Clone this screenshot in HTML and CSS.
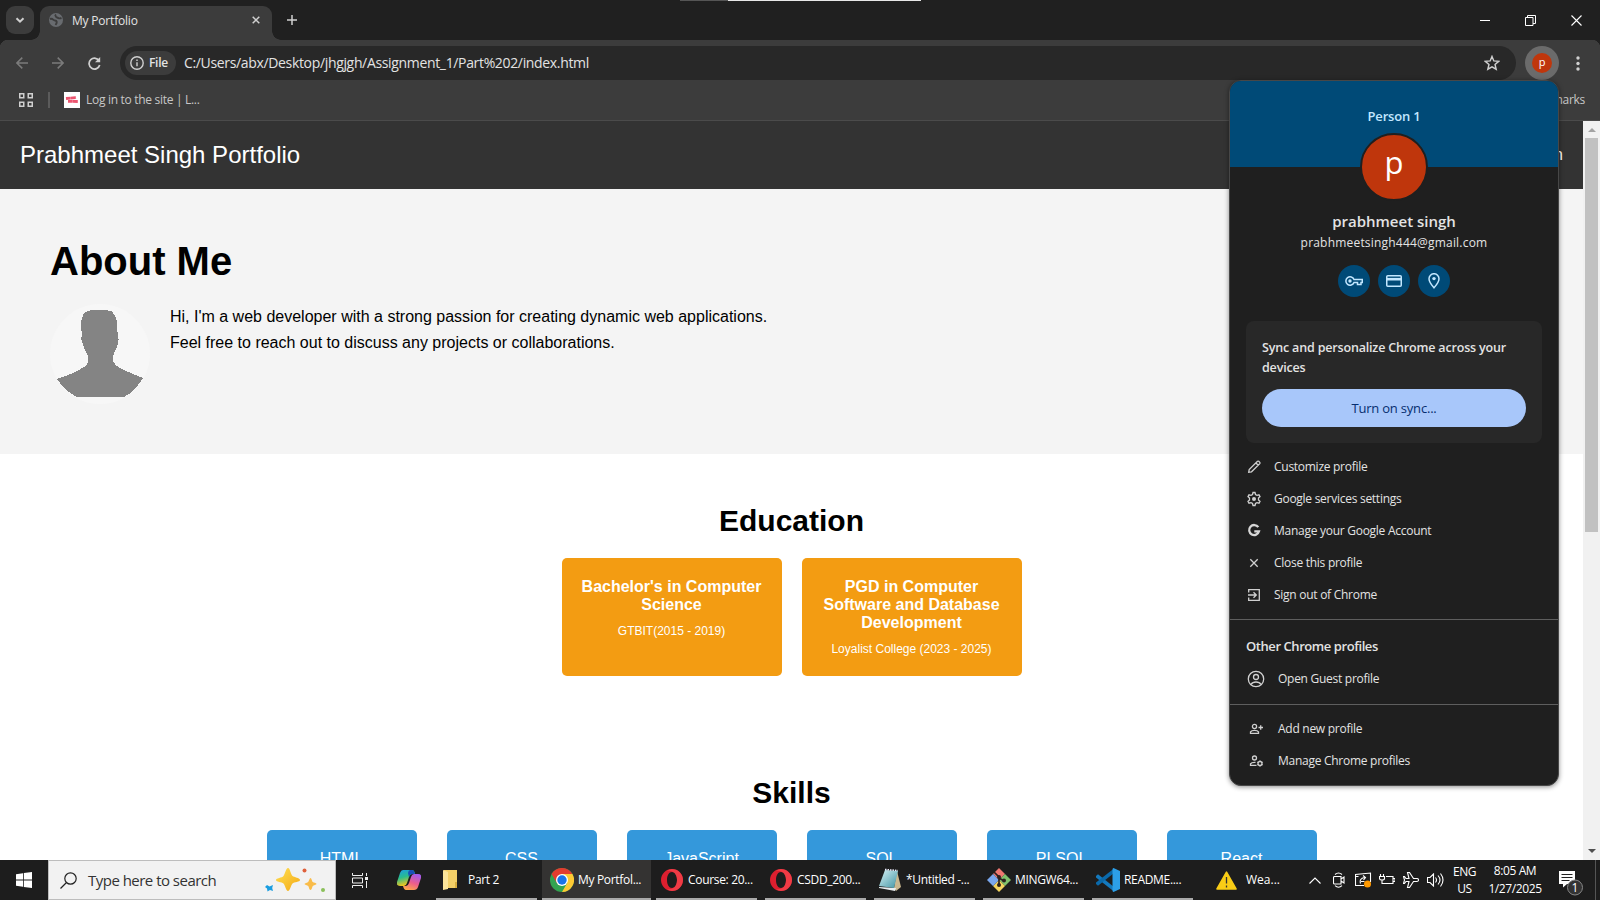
FILE: index.html
```html
<!DOCTYPE html>
<html lang="en">
<head>
<meta charset="utf-8">
<title>My Portfolio</title>
<link rel="stylesheet" href="styles.css">
</head>
<body>
<div class="screen">
  <div class="tabstrip">
    <div class="tab-search"><svg width="10" height="7" viewBox="0 0 10 7"><path d="M1.5 1.2 5 4.7 8.500 1.200" class="ln w2"/></svg></div>
    <div class="tab">
      <svg width="14" height="14" viewBox="0 0 14 14"><circle cx="7" cy="7" r="7" fill="#686b6f"/><path d="M1 6C4 5 4 7.500 6 7.500s2.500 2 .5 4.500M6 1.500C7 2.500 6 4 8 4.500s2 1.500 4.500.5" fill="none" stroke="#3c3c3c" stroke-width="1.900"/></svg>
      <span class="tab-title">My Portfolio</span>
      <svg width="8" height="8" viewBox="0 0 8 8"><path d="M.7.700l6.600 6.600M7.300.700.700 7.300" class="ln w15"/></svg>
    </div>
    <svg class="newtab" width="10" height="10" viewBox="0 0 10 10"><path d="M5 0v10M0 5h10" class="ln w15"/></svg>
    <div class="strip-line"></div>
    <div class="winbtns">
      <svg width="10" height="10" viewBox="0 0 10 10"><path d="M0 5.500h10" stroke="#fff"/></svg>
      <svg width="11" height="11" viewBox="0 0 11 11"><path d="M.5 2.500h7.500v8H.5zM2.500 2.500v-2h8v8H8" fill="none" stroke="#fff"/></svg>
      <svg width="11" height="11" viewBox="0 0 11 11"><path d="M.5.500l10 10M10.500.500l-10 10" stroke="#fff" stroke-width="1.100"/></svg>
    </div>
  </div>
  <div class="chrome">
    <div class="toolbar">
      <svg class="nav1" width="12" height="12" viewBox="0 0 12 12"><path d="M12 6H1M6.300.600.900 6l5.400 5.400" fill="none" stroke="#7b7b7b" stroke-width="1.500"/></svg>
      <svg class="nav2" width="12" height="12" viewBox="0 0 12 12"><path d="M0 6h11M5.700.600 11.100 6l-5.400 5.400" fill="none" stroke="#7b7b7b" stroke-width="1.500"/></svg>
      <svg class="nav3" width="13" height="13" viewBox="0 0 13 13"><path d="M11.300 4.200A5.400 5.400 0 1 0 11.700 8" class="ln w17"/><path d="M12.200 0v5.200H7z" fill="#d0d0d0"/></svg>
      <div class="omnibox">
        <div class="chip"><svg width="14" height="14" viewBox="0 0 14 14"><circle cx="7" cy="7" r="6.200" class="ln w14"/><path d="M7 6.200v4M7 3.500v1.500" class="ln w14"/></svg><span>File</span></div>
        <span class="url">C:/Users/abx/Desktop/jhgjgh/Assignment_1/Part%202/index.html</span>
        <svg class="star" width="16" height="16" viewBox="2 2 20 20"><path d="M12 3.800l2.300 5.600 6.100.5-4.600 4 1.400 5.900L12 16.700l-5.200 3.100 1.400-5.900-4.600-4 6.100-.5z" fill="none" stroke="#cfcfcf" stroke-width="1.800"/></svg>
      </div>
      <div class="avatar-btn"><span>p</span></div>
      <svg class="dots" width="4" height="15" viewBox="0 0 4 15"><g fill="#d0d0d0"><circle cx="2" cy="2" r="1.700"/><circle cx="2" cy="7.500" r="1.700"/><circle cx="2" cy="13" r="1.700"/></g></svg>
    </div>
    <div class="bookmarks">
      <svg width="14" height="14" viewBox="0 0 14 14"><path d="M.75.750h4v4h-4zM9.250.750h4v4h-4zM.75 9.250h4v4h-4zM9.250 9.250h4v4h-4z" class="ln w15"/></svg>
      <i class="sep"></i>
      <svg class="fav" width="16" height="16" viewBox="0 0 16 16"><path fill="#fff" d="M0 0h16v16H0z"/><path d="M2 6.500l10-1M4 9.300l10 .2" stroke="#ec5570" stroke-width="2.800" stroke-dasharray="4.600 .2"/></svg>
      <span class="bm">Log in to the site | L...</span>
      <span class="bm all">All Bookmarks</span>
    </div>
  </div>
  <div class="viewport">
    <main class="page">
      <header class="site-head"><span>Prabhmeet Singh Portfolio</span><span class="navlink">Education</span></header>
      <section class="about">
        <h1>About Me</h1>
        <div class="about-row">
          <svg width="100" height="100" viewBox="0 0 100 100"><circle cx="50" cy="50" r="50" fill="#f7f7f7"/><path d="M31 22C31 11 34 6 43 6h13c9 0 11 8 11 16l1 11c1 1 1 3 0 6-1 6-4 9-5 13l0 5c2 5 8 8 13 10l17 7c-5 8-11 15-19 19H27C19 89 12 83 7 75c8-3 15-5 20-8 5-3 11-5 11-10l0-5c-1-4-4-6-5-12-2-4-2-6-1-8z" fill="#848484" shape-rendering="crispEdges"/></svg>
          <p>Hi, I'm a web developer with a strong passion for creating dynamic web applications.<br>Feel free to reach out to discuss any projects or collaborations.</p>
        </div>
      </section>
      <section class="edu">
        <h2>Education</h2>
        <div class="edu-row">
          <article><h3>Bachelor's in Computer<br>Science</h3><p>GTBIT(2015 - 2019)</p></article>
          <article><h3>PGD in Computer<br>Software and Database<br>Development</h3><p>Loyalist College (2023 - 2025)</p></article>
        </div>
      </section>
      <section class="skills">
        <h2>Skills</h2>
        <div class="skill-row"><div>HTML</div><div>CSS</div><div>JavaScript</div><div>SQL</div><div>PLSQL</div><div>React</div></div>
      </section>
    </main>
    <div class="scrollbar"><i class="up"></i><i class="thumb"></i><i class="down"></i></div>
  </div>
  <div class="taskbar">
    <div class="start"><svg width="16" height="16" viewBox="0 0 16 16"><path fill="#fff" d="M0 2.200 7 1.200v6.400H0zM7.800 1.100 16 0v7.600H7.800zM0 8.400h7v6.400l-7-1zM7.800 8.400H16V16l-8.200-1.100z"/></svg></div>
    <div class="search">
      <svg width="17" height="17" viewBox="0 0 17 17"><circle cx="10.500" cy="6.500" r="5.700" fill="none" stroke="#222" stroke-width="1.200"/><path d="M6.500 10.500.5 16.500" stroke="#222" stroke-width="1.300"/></svg>
      <span>Type here to search</span>
      <svg class="spark" width="62" height="26" viewBox="0 0 62 26"><defs><linearGradient id="gold" x1="0" y1="0" x2="1" y2="1"><stop offset="0" stop-color="#ffe052"/><stop offset="1" stop-color="#f3a916"/></linearGradient></defs><path d="M24 1c2 0 3 7 4.500 8S36 11 36 13s-6 2-7.500 3.500S26 24 24 24s-3-6-4.500-7.500S12 15 12 13s6-2 7.500-4S22 1 24 1z" fill="url(#gold)"/><path d="M46.500 11c1 0 1.500 3.500 2.300 4s3.700 1 3.700 2-3 1-3.700 2-1 4-2.300 4-1.500-3-2.300-4-3.700-1-3.700-2 3-1 3.700-2 1.300-4 2.300-4z" fill="#f9bc4a"/><circle cx="40.500" cy="3.500" r="2" fill="#df603b"/><circle cx="59" cy="23" r="2" fill="#8bc05a"/><path d="M3 18l2.500 1.500L9 18l-.8 3L9 24l-3-1-2.500 1.500-.5-3L1 20z" fill="#1a9de0"/></svg>
    </div>
    <div class="taskview"><svg width="16" height="15" viewBox="0 0 16 15"><path d="M.5 0v2.500h10V0M.5 5h10v5H.5zM.5 15v-2.500h10V15M14.500 0v3M14.500 8v7" fill="none" stroke="#eee"/><path d="M13 4h3v3h-3z" fill="#eee"/></svg></div>
    <div class="copilot"><svg width="24" height="22" viewBox="0 0 24 22"><defs><linearGradient id="c1" x1="0" y1="0" x2=".3" y2="1"><stop offset="0" stop-color="#1b9be8"/><stop offset=".5" stop-color="#29bd8c"/><stop offset="1" stop-color="#f4c61c"/></linearGradient><linearGradient id="c2" x1=".6" y1="0" x2=".2" y2="1"><stop offset="0" stop-color="#a65be8"/><stop offset=".5" stop-color="#ed5d8c"/><stop offset="1" stop-color="#ffad45"/></linearGradient></defs><path d="M6 1h9q2.500 0 3 4H15q-2 0-3 3l-2 6q-1 3-3 3H3q-4 0-3-4L3 4Q4 1 6 1z" fill="url(#c1)"/><path d="M13 1h2q2 0 3 4H15q-2 0-3 3l-1-4Q11.500 1 13 1z" fill="#194fb9"/><path d="M17 5h4q4 0 3 4l-3 9q-1 3-4 3H9q-2 0-3-4h3q2 0 3-3l2-6q1-3 3-3z" fill="url(#c2)"/></svg></div>
    <div class="apps">
      <div class="app folder"><svg width="24" height="24" viewBox="0 0 24 24"><path d="M7 2h13v18H7z" fill="#f2cf68"/><path d="M6 2l5 2v17l-5 1z" fill="#fbe49a"/><path d="M18 14h2v6h-2z" fill="#d7ad3d"/></svg><span>Part 2</span></div>
      <div class="app active"><svg width="24" height="24" viewBox="0 0 24 24"><circle cx="12" cy="12" r="12" fill="#32a350"/><path d="M1.600 6A12 12 0 0 1 22.400 6H12L6.800 15z" fill="#e33b2e"/><path d="M22.400 6A12 12 0 0 1 12 24l5.200-9L12 6z" fill="#fcc934"/><circle cx="12" cy="12" r="6" fill="#fff"/><circle cx="12" cy="12" r="4.700" fill="#1a73e8"/></svg><span>My Portfol...</span></div>
      <div class="app"><svg width="24" height="24" viewBox="0 0 24 24"><path fill-rule="evenodd" fill="#dd1f2f" d="M12 1a11 11 0 1 0 0 22 11 11 0 0 0 0-22zm0 3c3 0 5 3.500 5 8s-2 8-5 8-5-3.500-5-8 2-8 5-8z"/><path d="M12 1a11 11 0 0 1 0 22q-3 0-5-2 3 1 6-1c2-1 4-4 4-8s-2-7-4-8q-3-2-6-1 2-2 5-2z" fill="#fa4b52" opacity=".65"/></svg><span>Course: 20...</span></div>
      <div class="app"><svg width="24" height="24" viewBox="0 0 24 24"><path fill-rule="evenodd" fill="#dd1f2f" d="M12 1a11 11 0 1 0 0 22 11 11 0 0 0 0-22zm0 3c3 0 5 3.500 5 8s-2 8-5 8-5-3.500-5-8 2-8 5-8z"/><path d="M12 1a11 11 0 0 1 0 22q-3 0-5-2 3 1 6-1c2-1 4-4 4-8s-2-7-4-8q-3-2-6-1 2-2 5-2z" fill="#fa4b52" opacity=".65"/></svg><span>CSDD_200...</span></div>
      <div class="app"><svg width="24" height="24" viewBox="0 0 24 24"><defs><linearGradient id="np" x1="0" y1="0" x2="1" y2="1"><stop offset="0" stop-color="#d8f3f6"/><stop offset="1" stop-color="#3f93a3"/></linearGradient></defs><path d="M19 3l4 16-5 4-2-3z" fill="#c9b78f"/><path d="M1 19l17 1-1 3L1 20z" fill="#e7edf0"/><path d="M7 2l13 1-4 17-15-2z" fill="url(#np)"/><path d="M7 1.500l13 1" stroke="#eef" stroke-width="1.500" stroke-dasharray="1.500 1"/></svg><span>*Untitled -...</span></div>
      <div class="app"><svg width="24" height="24" viewBox="0 0 24 24"><path d="M12 0l6 6-6 6-6-6z" fill="#ef7770"/><path d="M18 6l6 6-6 6-6-6z" fill="#80c26c"/><path d="M12 12l6 6-6 6-6-6z" fill="#f5d55f"/><path d="M6 6l6 6-6 6-6-6z" fill="#7aa7ed"/><path d="M7 4l5 5v9M12 10l5 3" fill="none" stroke="#2b211d" stroke-width="1.700"/><g fill="#2b211d"><circle cx="12" cy="9" r="2"/><circle cx="12" cy="17" r="2"/><circle cx="17" cy="12.500" r="2"/></g></svg><span>MINGW64...</span></div>
      <div class="app"><svg width="24" height="24" viewBox="0 0 24 24"><path d="M0 8l2-1.700L18 19v4.500L0 9.500z" fill="#1479bd"/><path d="M0 16l2 1.700L18 5V.5L0 14.500z" fill="#0a69aa"/><path d="M17.500 0L24 3v18l-6.500 3q-1 0-1-2V2q0-2 1-2z" fill="#2c9fe8"/></svg><span>README....</span></div>
    </div>
    <div class="tray">
      <svg class="warn" width="21" height="19" viewBox="0 0 21 19"><path d="M10.500 1.200 20 18H1z" fill="#f9cd16" stroke="#f9cd16" stroke-width="1.600" stroke-linejoin="round"/><path d="M10.500 6v6.500M10.500 14.500v2" stroke="#333" stroke-width="1.300"/></svg>
      <span class="wea">Wea...</span>
      <svg class="chev" width="12" height="7" viewBox="0 0 12 7"><path d="M.5 6.500 6 1l5.500 5.500" class="tl"/></svg>
      <svg class="t1" width="12" height="16" viewBox="0 0 12 16"><path d="M1 4.500h7v7.500H1.500q-1 0-1-1V5.500q0-1 1-1M8 7l3-2v6l-3-2M2 2.500Q5.500-.5 9 2.500M2 13.700q3.500 3 7 0" class="tl"/></svg>
      <svg class="t2" width="17" height="16" viewBox="0 0 17 16"><path d="M9 13.500H.5v-11l15-1.500v9M.5 4.500h3M5.500 11.500q-1.500-5 4-6M8 3.500l2.500 2L8.500 8M6 9.500h3.500" class="tl"/><circle cx="12.500" cy="12" r="3.500" fill="#ff9900"/></svg>
      <svg class="t3" width="16" height="12" viewBox="0 0 16 12"><path d="M7 2.500h7v7H3.500M14.500 4.500H16v3h-1.500M1.500 0v3M4.500 0v3M.5 2.500h5v2Q5.500 6 3 6T.5 4.500zM3 6v4" class="tl"/></svg>
      <svg class="t4" width="16" height="16" viewBox="0 0 16 16"><path d="M6 6.500 4.500.500h2l4 6H14q1.500 0 1.500 1.500T14 9.500h-3.500l-4 6h-2L6 9.500H3l-1.500 2h-1L1.500 8 .5 4.500h1l1.500 2z" class="tl"/></svg>
      <svg class="t5" width="17" height="14" viewBox="0 0 17 14"><path d="M.5 4.500h2.500L6.500 1v12L3 9.500H.5zM8.500 4.500q2 2.500 0 5M11 2.500q4 4.500 0 9M13.500.500q5 6.500 0 13" class="tl"/></svg>
      <div class="lang">ENG<br>US</div>
      <div class="clock">8:05 AM<br>1/27/2025</div>
      <svg class="note" width="25" height="25" viewBox="0 0 25 25"><path d="M0 0h16v13H8l-4 3.500V13H0z" fill="#fff"/><path d="M2.500 3.500h11M2.500 6.500h11M2.500 9.500h8" stroke="#222"/><circle cx="16" cy="16.500" r="7.500" fill="#333" stroke="#888"/><text x="16" y="21" text-anchor="middle" font-family="Open Sans, sans-serif" font-size="12" fill="#fff">1</text></svg>
      <i class="desk"></i>
    </div>
  </div>

  <aside class="popup">
    <div class="banner"><span>Person 1</span></div>
    <div class="big-avatar"><span>p</span></div>
    <div class="pname">prabhmeet singh</div>
    <div class="pmail">prabhmeetsingh444@gmail.com</div>
    <div class="rounds">
      <div><svg width="18" height="10" viewBox="0 0 18 10"><path d="M9 3.500a4.200 4.200 0 1 0 0 3h3.500v2H16v-2h1.300v-3z" fill="none" stroke="#c2e7ff" stroke-width="1.500"/><circle cx="5" cy="5" r="1.700" fill="#c2e7ff"/></svg></div>
      <div><svg width="16" height="12" viewBox="0 0 16 12"><rect x=".75" y=".75" width="14.500" height="10.500" rx="1" fill="none" stroke="#c2e7ff" stroke-width="1.500"/><path d="M1 4.200h14" stroke="#c2e7ff" stroke-width="2.600"/></svg></div>
      <div><svg width="12" height="16" viewBox="0 0 12 16"><path d="M6 14.800C3 11.300 1 8.500 1 5.700a5 5 0 0 1 10 0c0 2.800-2 5.600-5 9.100z" fill="none" stroke="#c2e7ff" stroke-width="1.500"/><circle cx="6" cy="5.600" r="1.700" fill="#c2e7ff"/></svg></div>
    </div>
    <div class="sync"><p>Sync and personalize Chrome across your<br>devices</p><div class="btn">Turn on sync...</div></div>
    <div class="menu">
      <div class="item"><svg viewBox="0 0 16 16"><path d="M2.700 13.300l.5-2.800 8.300-8.200q.6-.5 1.200 0l1.100 1.100q.5.600 0 1.200l-8.300 8.200zM10 4l2.200 2.200" class="ic"/></svg><span>Customize profile</span></div>
      <div class="item"><svg viewBox="0 0 16 16"><path d="M6.500 3.500 7 1.500h2l.5 2L11 4.400l2-.6 1 1.800L12.500 7v2l1.500 1.400-1 1.800-2-.6-1.500.9-.5 2H7l-.5-2-1.500-.9-2 .6-1-1.800L3.500 9V7L2 5.600l1-1.800 2 .6z" class="ic"/><circle cx="8" cy="8" r="2" fill="#d0d0d0"/></svg><span>Google services settings</span></div>
      <div class="item"><svg viewBox="0 0 16 16"><path d="M12.300 4.200A5 5 0 1 0 13 8.300H8.300" fill="none" stroke="#d6d6d6" stroke-width="2.300"/></svg><span>Manage your Google Account</span></div>
      <div class="item"><svg viewBox="0 0 16 16"><path d="M4.300 4.300l7.400 7.400M11.700 4.300l-7.400 7.400" class="ic"/></svg><span>Close this profile</span></div>
      <div class="item"><svg viewBox="0 0 16 16"><path d="M2.700 5.500V2.700h10.600v10.600H2.700v-2.800M2 8h8M7.500 5.200 10.300 8l-2.800 2.800" class="ic"/></svg><span>Sign out of Chrome</span></div>
    </div>
    <div class="others">
      <h4>Other Chrome profiles</h4>
      <div class="item"><svg class="guest" viewBox="0 0 18 18"><circle cx="9" cy="9" r="7.700" class="ic"/><circle cx="9" cy="7" r="2.500" class="ic"/><path d="M4 14.500Q5.500 12 9 12t5 2.500" class="ic"/></svg><span>Open Guest profile</span></div>
    </div>
    <div class="manage">
      <div class="item"><svg viewBox="0 0 16 16"><circle cx="6.500" cy="5.500" r="2.100" class="ic"/><path d="M2.500 12.300v-1.500q1-1.500 4-1.500t4 1.500v1.500zM10.500 6.500h4.500M12.700 4.300v4.400" class="ic"/></svg><span>Add new profile</span></div>
      <div class="item"><svg viewBox="0 0 16 16"><circle cx="6.500" cy="5" r="2" class="ic"/><path d="M8.500 12.300h-6v-1.500q1-1.500 4-1.500h1" class="ic"/><circle cx="12" cy="10.500" r="2" class="ic"/><path d="M12 7.500v1M12 12.500v1M9.400 9l.9.500M13.700 11.500l.9.500M9.400 12l.9-.5M13.700 9.500l.9-.5" class="ic"/></svg><span>Manage Chrome profiles</span></div>
    </div>
  </aside>
  <div class="topmark"></div>
</div>
</body>
</html>
```

FILE: styles.css
```css
* { box-sizing: border-box; margin: 0; padding: 0; }
body { font-family: "Open Sans", "Noto Sans", sans-serif; background: #fff; overflow: hidden; }
svg { display: block; flex: none; }
span { white-space: nowrap; }
.screen { position: relative; width: 1600px; height: 900px; display: flex; flex-direction: column; overflow: hidden; }
.ln { fill: none; stroke: #d0d0d0; }
.w14 { stroke-width: 1.4; } .w15 { stroke-width: 1.5; } .w17 { stroke-width: 1.7; } .w2 { stroke-width: 2; }

/* tab strip */
.tabstrip { height: 40px; background: #202020; display: flex; align-items: center; flex: none; }
.tab-search { width: 28px; height: 28px; margin-left: 6px; border-radius: 9px; background: #3c3c3c; display: flex; align-items: center; justify-content: center; }
.tab { position: relative; width: 232px; height: 34px; margin: 6px 0 0 6px; border-radius: 9px 9px 0 0; background: #3c3c3c; display: flex; align-items: center; padding: 0 12px 6px 9px; }
.tab::before, .tab::after { content: ""; position: absolute; bottom: 0; width: 9px; height: 9px; }
.tab::before { left: -9px; background: radial-gradient(circle at 0 0, #202020 8.500px, #3c3c3c 9px); }
.tab::after { right: -9px; background: radial-gradient(circle at 100% 0, #202020 8.500px, #3c3c3c 9px); }
.tab-title { flex: 1; margin-left: 9px; font-size: 12px; color: #e3e3e3; letter-spacing: -.2px; }
.newtab { margin-left: 15px; }
.strip-line { flex: 1; }
.winbtns { display: flex; align-items: center; gap: 35px; margin-right: 18px; }
.topmark { position: absolute; left: 680px; top: 0; width: 241px; height: 1px; background: linear-gradient(90deg, #555 48px, #e8e8e8 48px); }

/* toolbar */
.chrome { background: #3c3c3c; height: 81px; flex: none; border-bottom: 1px solid #4b4b4b; border-radius: 8px 8px 0 0; box-shadow: 0 -8px 0 0 #202020; }
.chrome { position: relative; background: radial-gradient(circle at 8px 8px, #3c3c3c 8px, #202020 8.500px) 0 0 / 8px 8px no-repeat, radial-gradient(circle at 0 8px, #3c3c3c 8px, #202020 8.500px) 100% 0 / 8px 8px no-repeat, #3c3c3c; border-radius: 0; box-shadow: none; }
.toolbar { height: 46px; display: flex; align-items: center; }
.nav1 { margin-left: 16px; } .nav2 { margin-left: 24px; } .nav3 { margin-left: 24px; }
.omnibox { margin-left: 19px; width: 1396px; height: 34px; border-radius: 17px; background: #282828; display: flex; align-items: center; padding: 0 16px 0 5px; }
.chip { height: 24px; width: 51px; border-radius: 12px; background: #3c3c3c; display: flex; align-items: center; gap: 5px; padding: 0 0 1px 5px; font-size: 12px; font-weight: 600; color: #e3e3e3; letter-spacing: -.3px; }
.url { margin-left: 8px; padding-bottom: 1px; flex: 1; font-size: 14px; color: #e3e3e3; letter-spacing: -.34px; }
.avatar-btn { margin-left: 9px; width: 34px; height: 34px; border-radius: 50%; background: #6b6b6b; display: flex; align-items: center; justify-content: center; }
.avatar-btn span { width: 20px; height: 20px; border-radius: 50%; background: #bf360c; color: #fff; font-size: 11px; line-height: 17px; text-align: center; }
.dots { margin-left: 17px; }
.bookmarks { height: 34px; display: flex; align-items: center; padding: 0 15px 6px 19px; }
.bookmarks .sep { width: 2px; height: 16px; background: #5b5b5b; margin: 0 14px 0 15px; }
.bm { margin-left: 6px; font-size: 12px; color: #c7c7c7; letter-spacing: -.3px; padding-bottom: 1px; }
.bm.all { margin-left: auto; }

/* page */
.viewport { height: 739px; display: flex; overflow: hidden; flex: none; }
.page { width: 1583px; font-family: "Liberation Sans", Arial, sans-serif; color: #000; overflow: hidden; }
.site-head { height: 68px; background: #333; color: #fff; display: flex; align-items: center; justify-content: space-between; padding: 0 20px; font-size: 24px; }
.navlink { font-size: 16px; }
.about { height: 265px; background: #f4f4f4; padding: 49px 50px 0; }
.about h1 { font-size: 40px; line-height: 46px; }
.about-row { display: flex; gap: 20px; margin-top: 20px; }
.about-row p { font-size: 16px; line-height: 26px; }
.edu { padding-top: 50px; height: 272px; }
h2 { font-size: 30px; line-height: 34px; text-align: center; }
.edu-row { display: flex; justify-content: center; gap: 20px; margin-top: 20px; }
.edu-row article { width: 220px; height: 118px; border-radius: 5px; background: #f39c12; color: #fff; text-align: center; padding-top: 20px; }
.edu-row h3 { font-size: 16px; line-height: 18px; }
.edu-row p { font-size: 12px; line-height: 14px; margin-top: 10px; }
.skills { padding-top: 50px; }
.skill-row { display: flex; justify-content: center; gap: 30px; margin-top: 20px; }
.skill-row div { width: 150px; height: 58px; border-radius: 5px; background: #3498db; color: #fff; font-size: 16px; line-height: 18px; text-align: center; padding-top: 20px; }
.scrollbar { width: 17px; background: #f1f1f1; display: flex; flex-direction: column; align-items: center; }
.scrollbar .up { margin-top: 7px; border: 4px solid transparent; border-top: 0; border-bottom: 4px solid #a3a3a3; }
.scrollbar .thumb { width: 13px; height: 394px; margin-top: 6px; background: #c1c1c1; }
.scrollbar .down { margin: auto 0 7px; border: 4px solid transparent; border-bottom: 0; border-top: 4px solid #505050; }

/* taskbar */
.taskbar { height: 40px; background: #1d1d1d; display: flex; color: #fff; flex: none; }
.start { width: 48px; display: flex; align-items: center; justify-content: center; }
.search { width: 288px; background: #f2f2f2; border: 1px solid #bdbdbd; display: flex; align-items: center; padding: 0 9px 0 11px; font-size: 15px; color: #333; letter-spacing: -.52px; }
.search span { margin-left: 11px; flex: 1; }
.spark { margin-top: -1px; }
.taskview { width: 48px; display: flex; align-items: center; justify-content: center; }
.copilot { width: 52px; display: flex; align-items: center; padding-left: 13px; }
.apps { display: flex; gap: 8px; }
.app { width: 101px; height: 40px; display: flex; align-items: center; gap: 4px; padding-left: 4px; border-bottom: 2px solid #aaa; font-size: 12px; letter-spacing: -.32px; }
.app svg { position: relative; top: 1px; }
.app.folder { gap: 7px; padding-left: 1px; }
.app.active { width: 109px; background: #343332; padding-left: 8px; margin-left: -3px; margin-right: -3px; }
.tray { flex: 1; display: flex; align-items: center; justify-content: flex-end; font-size: 12px; }
.tl { fill: none; stroke: #fff; stroke-width: 1.1; }
.wea { margin-left: 9px; width: 38px; padding-bottom: 1px; }
.chev { margin-left: 25px; } .t1 { margin-left: 12px; } .t2 { margin-left: 10px; } .t3 { margin-left: 7px; } .t4 { margin-left: 8px; } .t5 { margin-left: 8px; }
.lang { width: 27px; margin-left: 7px; text-align: center; line-height: 17px; letter-spacing: -.5px; }
.clock { width: 56px; margin-left: 9px; text-align: center; line-height: 18px; letter-spacing: -.4px; white-space: nowrap; }
.note { margin: 7px 11px 0 16px; }
.desk { width: 1px; height: 40px; background: #555; margin-right: 4px; }

/* profile menu */
.popup { position: absolute; left: 1229px; top: 80px; width: 330px; height: 706px; border: 1px solid #474747; border-radius: 12px; background: #1f1f1f; color: #e3e3e3; overflow: hidden; box-shadow: 0 1px 5px rgba(0,0,0,.45); display: flex; flex-direction: column; align-items: stretch; font-size: 12px; }
.banner { height: 86px; background: #004a77; color: #c2e7ff; text-align: center; font-size: 13px; font-weight: 600; line-height: 18px; padding-top: 26px; flex: none; letter-spacing: -.2px; }
.big-avatar { position: relative; width: 68px; height: 68px; margin: -34px auto 0; border-radius: 50%; border: 2px solid #1f1f1f; background: #bf360c; color: #fff; font-size: 31px; line-height: 54px; text-align: center; flex: none; font-weight: 500; }
.pname { margin-top: 9px; text-align: center; font-size: 15px; line-height: 22px; font-weight: 600; }
.pmail { text-align: center; line-height: 20px; letter-spacing: .2px; padding-top: 1px; }
.rounds { display: flex; justify-content: center; gap: 8px; margin-top: 12px; }
.rounds div { width: 32px; height: 32px; border-radius: 50%; background: #004a77; display: flex; align-items: center; justify-content: center; }
.sync { margin: 24px 16px 0; height: 122px; border-radius: 8px; background: #282828; padding: 17px 16px; }
.sync p { font-size: 12.500px; line-height: 20px; font-weight: 600; white-space: nowrap; letter-spacing: -.17px; }
.btn { height: 38px; margin-top: 11px; border-radius: 19px; background: #a8c7fa; color: #062e6f; text-align: center; line-height: 38px; font-size: 13px; font-weight: 500; letter-spacing: -.2px; }
.menu { padding: 8px 16px 8px; border-bottom: 1px solid #5e5e5e; }
.item { height: 32px; display: flex; align-items: center; gap: 12px; letter-spacing: -.27px; }
.item span { padding-bottom: 2px; }
.item svg { width: 16px; height: 16px; }
.ic { fill: none; stroke: #d0d0d0; stroke-width: 1.3; }
.others { padding: 16px 16px 5px; border-bottom: 1px solid #5e5e5e; }
.others h4 { font-size: 13px; line-height: 20px; font-weight: 600; letter-spacing: -.43px; }
.others .item { height: 40px; margin-top: 3px; gap: 13px; padding-left: 1px; }
.others .guest { width: 18px; height: 18px; }
.manage { padding: 8px 18px; }
.manage .item { gap: 14px; }
```
